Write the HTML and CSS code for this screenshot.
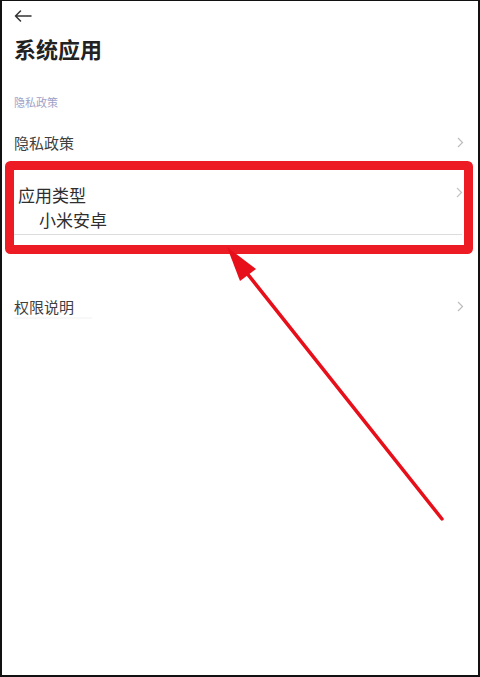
FILE: index.html
```html
<!DOCTYPE html>
<html lang="zh">
<head>
<meta charset="utf-8">
<title>系统应用</title>
<link rel="stylesheet" href="styles.css">
</head>
<body>
<div class="screen">
  <div class="frame">
    <div class="topbar">
      <svg class="back" width="20" height="12" viewBox="0 0 20 12">
        <path d="M18 6H2.5M7.5 1L2.5 6l5 5" fill="none" stroke="#333" stroke-width="1.5" stroke-linecap="round" stroke-linejoin="round"/>
      </svg>
    </div>
    <h1 class="title">系统应用</h1>
    <div class="section-label">隐私政策</div>
    <div class="row row-privacy">
      <span class="row-text">隐私政策</span>
      <svg class="chev" width="7" height="11" viewBox="0 0 7 11"><path d="M1 1l4.5 4.5L1 10" fill="none" stroke="#bdbdbd" stroke-width="1.2"/></svg>
    </div>
    <div class="row row-type">
      <div class="type-lines">
        <span class="type-title">应用类型</span>
        <span class="type-value">小米安卓</span>
      </div>
      <svg class="chev" width="7" height="11" viewBox="0 0 7 11"><path d="M1 1l4.5 4.5L1 10" fill="none" stroke="#c4c4c4" stroke-width="1.2"/></svg>
    </div>
    <div class="divider"></div>
    <div class="row row-perm">
      <span class="row-text">权限说明</span>
      <svg class="chev" width="7" height="11" viewBox="0 0 7 11"><path d="M1 1l4.5 4.5L1 10" fill="none" stroke="#bdbdbd" stroke-width="1.2"/></svg>
    </div>
    <div class="faint"></div>
  </div>
  <svg class="annotation" width="480" height="677" viewBox="0 0 480 677">
    <rect x="9.5" y="165.5" width="459" height="84" rx="1" fill="none" stroke="#ed1c24" stroke-width="9" stroke-linejoin="round"/>
    <line x1="442" y1="519" x2="238" y2="262" stroke="#e60f1a" stroke-width="3.5" stroke-linecap="round"/>
    <polygon points="227,247 240,281 256,269" fill="#e60f1a"/>
  </svg>
</div>
</body>
</html>
```
FILE: styles.css
```css
* { box-sizing: border-box; }
html, body { margin: 0; padding: 0; background: #fff; }
body { font-family: "Noto Sans CJK SC", "Noto Sans", sans-serif; }

.screen {
  position: relative;
  width: 480px;
  height: 677px;
}

.frame {
  width: 480px;
  height: 677px;
  border: 2px solid #111;
  border-top-width: 1px;
  background: #fff;
  display: flex;
  flex-direction: column;
}

.topbar {
  height: 29px;
  display: flex;
  align-items: center;
  padding-left: 11px;
}

.title {
  margin: 7px 0 0 0;
  padding-left: 12px;
  font-size: 22px;
  line-height: 22px;
  font-weight: 700;
  color: #222;
}

.section-label {
  margin-top: 38px;
  padding-left: 12px;
  font-size: 11px;
  line-height: 11px;
  color: #9ea2c8;
}

.row {
  display: flex;
  justify-content: space-between;
  align-items: center;
  padding: 0 14px 0 12px;
}

.row-text {
  font-size: 15px;
  line-height: 15px;
  color: #404040;
}

.row-privacy { margin-top: 27px; }

.row-type {
  margin-top: 36px;
  align-items: flex-start;
  padding-left: 16px;
}

.type-lines {
  display: flex;
  flex-direction: column;
  gap: 8px;
}

.type-title, .type-value {
  font-size: 17px;
  line-height: 17px;
  color: #2e2e2e;
}

.type-value { padding-left: 21px; }

.row-type .chev { margin-top: 1px; margin-right: 1px; }

.divider {
  margin: 6px 16px 0 12px;
  height: 1px;
  background: #dcdcdc;
}

.row-perm { margin-top: 64px; }

.faint {
  margin: 3px 0 0 12px;
  width: 78px;
  height: 2px;
  background: #f8f8f8;
}

.annotation {
  position: absolute;
  top: 0;
  left: 0;
  pointer-events: none;
}
```
